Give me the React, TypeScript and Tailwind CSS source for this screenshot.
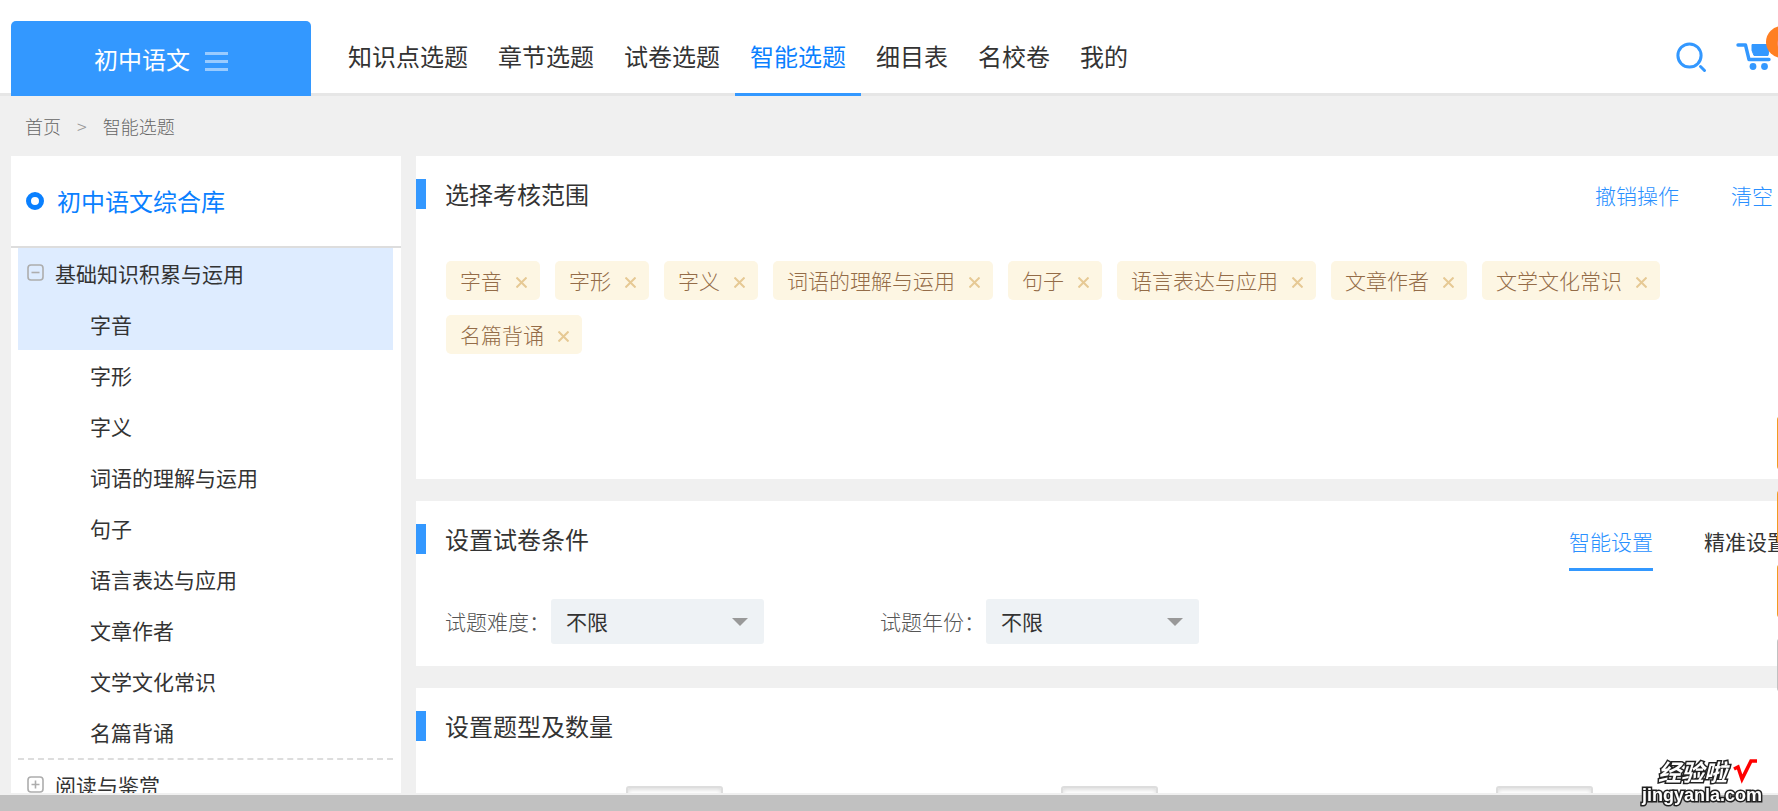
import { useState } from "react";
import type { ReactNode } from "react";

const navItems = ["知识点选题", "章节选题", "试卷选题", "智能选题", "细目表", "名校卷", "我的"];

const treeItems = [
    "字音",
    "字形",
    "字义",
    "词语的理解与运用",
    "句子",
    "语言表达与应用",
    "文章作者",
    "文学文化常识",
    "名篇背诵",
];

const questionTypes = ["选择题", "填空题", "阅读题"];

function SearchIcon() {
    return (
        <svg width="32" height="32" viewBox="0 0 32 32" fill="none" stroke="#3398ff" strokeWidth="3">
            <circle cx="14.5" cy="14.5" r="11.6" />
            <path d="M25.5 25.500l4 4" strokeLinecap="round" />
        </svg>
    );
}

function CartIcon() {
    return (
        <svg width="36" height="32" viewBox="0 0 36 32" fill="none">
            <path d="M3 4h7.500l3.500 14.500H34" stroke="#3398ff" strokeWidth="3.4" strokeLinecap="round" strokeLinejoin="round" />
            <path d="M17 3.500h18l-2 11H19l-2-5z" fill="#3398ff" stroke="#3398ff" strokeLinejoin="round" />
            <circle cx="18" cy="25.500" r="3.400" fill="#3398ff" />
            <circle cx="29.500" cy="25.500" r="3.400" fill="#3398ff" />
        </svg>
    );
}

function ToggleIcon({ open }: { open: boolean }) {
    return (
        <svg className="mb-[3px]" width="17" height="17" viewBox="0 0 17 17" fill="none" stroke="#adadad" strokeWidth="1.6">
            <rect x="1" y="1" width="15" height="15" rx="3" />
            <path d={open ? "M4.500 8.500h8" : "M4.500 8.500h8M8.500 4.500v8"} />
        </svg>
    );
}

function Panel({ title, extra, className = "", children }: { title: string; extra?: ReactNode; className?: string; children?: ReactNode }) {
    return (
        <section className={`bg-white ${className}`}>
            <div className="flex items-start justify-between">
                <div className="flex items-center gap-[19px]">
                    <span className="h-[30px] w-[10px] bg-[#3398ff]" />
                    <h2 className="text-[24px] leading-[30px] font-normal">{title}</h2>
                </div>
                {extra}
            </div>
            {children}
        </section>
    );
}

function SelectField({ id, label }: { id: string; label: string }) {
    return (
        <div className="flex w-[435px] items-center">
            <label htmlFor={id} className="w-[106px] whitespace-nowrap text-[#555]">
                {label}
            </label>
            <div className="relative">
                <select id={id} className="h-[45px] w-[213px] appearance-none rounded-[3px] bg-[#eef2f5] px-[15px] text-[21px] font-normal text-[#333]">
                    <option>不限</option>
                </select>
                <svg className="pointer-events-none absolute top-[19px] right-4" width="16" height="8" viewBox="0 0 16 8">
                    <path d="M0 0h16L8 8z" fill="#999" />
                </svg>
            </div>
        </div>
    );
}

export default function App() {
    const [tags, setTags] = useState(treeItems);

    return (
        <div className="flex h-screen flex-col overflow-hidden bg-[#f0f0f0] font-['Noto_Sans_CJK_SC',sans-serif] text-[21px] font-light text-[#333]">
            {/* Header */}
            <header className="-mr-5 flex h-24 shrink-0 items-end border-b-[3px] border-[#e6e6e6] bg-white pl-[11px]">
                <button className="-mb-[3px] flex h-[75px] w-[300px] items-center justify-center gap-[15px] rounded-t-[5px] bg-[#3398ff] text-[24px] font-normal text-white">
                    初中语文
                    <span className="flex flex-col gap-[5px] pt-[5px]">
                        <i className="h-[3px] w-[23px] bg-[#99cbff]" />
                        <i className="h-[3px] w-[23px] bg-[#99cbff]" />
                        <i className="h-[3px] w-[23px] bg-[#99cbff]" />
                    </span>
                </button>
                <nav className="-mb-[3px] ml-[22px] flex text-[24px] font-normal">
                    {navItems.map((item) => (
                        <a
                            key={item}
                            href="#"
                            className={`flex h-[78px] items-center border-b-[3px] px-[15px] ${
                                item === "智能选题" ? "border-[#3398ff] text-[#0a80ff]" : "border-transparent"
                            }`}
                        >
                            {item}
                        </a>
                    ))}
                </nav>
                <div className="ml-auto flex gap-[28px] pr-[27px] pb-5">
                    <button aria-label="搜索">
                        <SearchIcon />
                    </button>
                    <button aria-label="试题篮" className="relative">
                        <CartIcon />
                        <span className="absolute -top-[15px] -right-[27px] flex size-8 items-center justify-center rounded-full bg-[#ff7f22] text-[18px] text-white">
                            0
                        </span>
                    </button>
                </div>
            </header>

            {/* Breadcrumb */}
            <div className="flex h-[60px] shrink-0 items-center gap-4 pl-[25px] text-[18px] text-[#666]">
                <a href="#">首页</a>
                <span className="text-[#999]">&gt;</span>
                <a href="#">智能选题</a>
            </div>

            <main className="-mr-5 flex min-h-0 flex-1 gap-[15px] overflow-hidden pl-[11px]">
                {/* Knowledge tree */}
                <aside className="w-[390px] shrink-0 bg-white">
                    <div className="flex h-[92px] items-center gap-[13px] border-b-2 border-[#ddd] pl-[15px] text-[24px] font-normal text-[#0a80ff]">
                        <span className="size-[18px] rounded-full border-5 border-[#0a80ff]" />
                        初中语文综合库
                    </div>
                    <ul className="mr-2 ml-[7px] font-normal">
                        <li className="border-b-2 border-dashed border-[#ddd]">
                            <button className="flex h-[51px] w-full items-center gap-[11px] bg-[#deecff] pl-[9px]">
                                <ToggleIcon open />
                                基础知识积累与运用
                            </button>
                            <ul>
                                {treeItems.map((item, i) => (
                                    <li key={item} className={`flex h-[51px] items-center pl-[72px] ${i === 0 ? "bg-[#deecff]" : ""}`}>
                                        <a href="#">{item}</a>
                                    </li>
                                ))}
                            </ul>
                        </li>
                        <li>
                            <button className="flex h-[51px] w-full items-center gap-[11px] pl-[9px]">
                                <ToggleIcon open={false} />
                                阅读与鉴赏
                            </button>
                        </li>
                    </ul>
                </aside>

                <div className="flex min-w-0 flex-1 flex-col gap-[22px]">
                    <Panel
                        title="选择考核范围"
                        className="min-h-[323px] pt-[23px]"
                        extra={
                            <div className="flex gap-[52px] pr-[25px] leading-[32px] text-[#2a90ff]">
                                <button>撤销操作</button>
                                <button onClick={() => setTags([])}>清空</button>
                            </div>
                        }
                    >
                        <div className="mt-[50px] flex flex-wrap gap-[15px] pr-[120px] pl-[30px]">
                            {tags.map((tag) => (
                                <span key={tag} className="flex h-[39px] items-center gap-[14px] rounded-[5px] bg-[#fdf6e3] pr-[13px] pl-[14px] text-[#946c48]">
                                    {tag}
                                    <button className="pt-[3px]" aria-label={`删除${tag}`} onClick={() => setTags(tags.filter((t) => t !== tag))}>
                                        <svg width="11" height="11" viewBox="0 0 11 11" stroke="#e6c994" strokeWidth="2">
                                            <path d="M.5.5l10 10M10.5.5l-10 10" />
                                        </svg>
                                    </button>
                                </span>
                            ))}
                        </div>
                    </Panel>

                    <Panel
                        title="设置试卷条件"
                        className="pt-[23px] pb-[22px]"
                        extra={
                            <div className="flex gap-[51px] pr-[10px] whitespace-nowrap">
                                <button className="h-[47px] border-b-[3px] border-[#3398ff] pb-2 text-[#2a90ff]">智能设置</button>
                                <button className="h-[47px] border-b-[3px] border-transparent pb-2 font-normal">精准设置</button>
                            </div>
                        }
                    >
                        <div className="mt-7 flex pl-[29px]">
                            <SelectField id="difficulty" label="试题难度：" />
                            <SelectField id="year" label="试题年份：" />
                        </div>
                    </Panel>

                    <Panel title="设置题型及数量" className="flex-1 pt-[23px]">
                        <div className="mt-[45px] flex pl-[30px]">
                            {questionTypes.map((type) => (
                                <div key={type} className="w-[435px] pl-[180px]">
                                    <input aria-label={type} className="h-10 w-[97px] rounded-[3px] border-2 border-[#ddd] px-2 shadow-[inset_0_2px_4px_#ddd]" />
                                </div>
                            ))}
                        </div>
                    </Panel>
                </div>
            </main>

            {/* Horizontal scroll track */}
            <div className="h-[18px] shrink-0 border-t-2 border-[#f0f0f0] bg-[#c1c1c1]" />

            {/* Floating side buttons, only their edge is on screen */}
            <div className="fixed top-[416px] -right-[53px] flex flex-col gap-5">
                <button aria-label="客服" className="size-[54px] rounded-[4px] bg-[#f39c1f]" />
                <button aria-label="反馈" className="size-[54px] rounded-[4px] bg-[#f39c1f]" />
                <button aria-label="帮助" className="size-[54px] rounded-[4px] bg-[#f39c1f]" />
                <button aria-label="返回顶部" className="size-[54px] rounded-[4px] bg-[#c1c1c1]" />
            </div>

            {/* Site mark */}
            <div className="fixed right-4 bottom-[5px] flex flex-col items-end font-bold text-white [paint-order:stroke_fill] [-webkit-text-stroke:3px_#222]">
                <div className="flex items-center gap-1.5 pr-1">
                    <span className="text-[23px] leading-[26px] italic">经验啦</span>
                    <svg width="25" height="26" viewBox="0 0 25 26" fill="none" stroke="#f00" strokeWidth="3.6">
                        <path d="M1 11l4-2 4 12L18 3h6" />
                    </svg>
                </div>
                <span className="font-['Liberation_Sans',sans-serif] text-[18px] leading-[22px]">jingyanla.com</span>
            </div>
        </div>
    );
}
